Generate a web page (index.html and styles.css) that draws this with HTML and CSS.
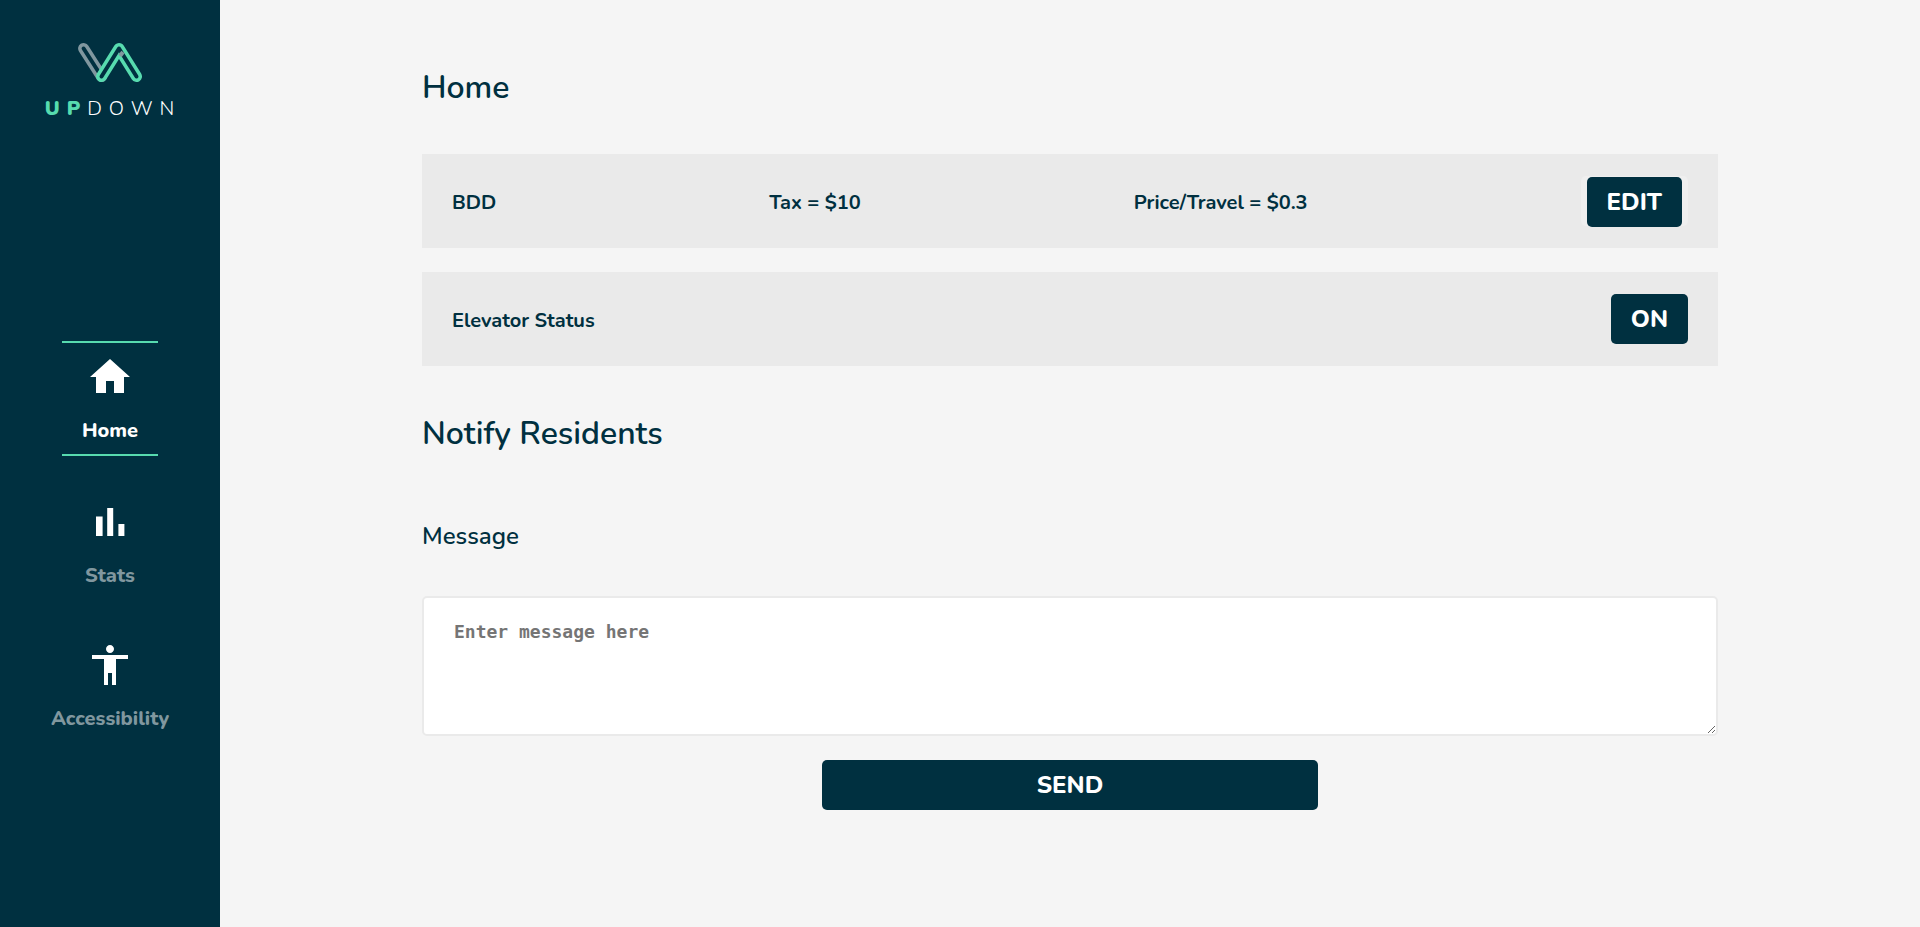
FILE: index.html
```
<!DOCTYPE html>
<html lang="en">
<head>
<meta charset="utf-8">
<title>UpDown</title>
<link rel="stylesheet" href="styles.css">
</head>
<body>
<div class="app">
  <aside class="sidebar">
    <div class="brand">
      <svg class="brand-mark" viewBox="0 0 66 42" role="img" aria-label="UpDown logo" fill="none" stroke-linecap="round" stroke-linejoin="round">
        <path d="M6.6 7.5 24.5 35.5" stroke="#80979f" stroke-width="11"/>
        <path d="M6.6 7.5 24.5 35.5" stroke="#003040" stroke-width="4"/>
        <path d="M24.5 35.5 42 7.5 59.5 35.5" stroke="#57dbaf" stroke-width="11"/>
        <path d="M24.5 35.5 42 7.5 59.5 35.5" stroke="#003040" stroke-width="4"/>
        <path d="M43 15 46 11" stroke="#80979f" stroke-width="4" stroke-linecap="butt"/>
      </svg>
      <p class="wordmark"><strong>UP</strong><span>DOWN</span></p>
    </div>
    <nav class="nav">
      <a class="nav-item active" href="#home">
        <svg class="nav-icon" viewBox="0 0 24 24" aria-hidden="true"><path d="M10 20v-6h4v6h5v-8h3L12 3 2 12h3v8z"/></svg>
        <span>Home</span>
      </a>
      <a class="nav-item" href="#stats">
        <svg class="nav-icon" viewBox="0 0 24 24" aria-hidden="true"><path d="M5 9.2h3.3V19H5zM10.6 5h3v14h-3zm5.600 8h3v6h-3z"/></svg>
        <span>Stats</span>
      </a>
      <a class="nav-item" href="#accessibility">
        <svg class="nav-icon" viewBox="0 0 24 24" aria-hidden="true"><path d="M12 2c1.1 0 2 .9 2 2s-.9 2-2 2-2-.9-2-2 .9-2 2-2zm9 7h-6v13h-2v-6h-2v6H9V9H3V7h18v2z"/></svg>
        <span>Accessibility</span>
      </a>
    </nav>
  </aside>
  <main class="main">
    <h1 class="title">Home</h1>
    <section class="cards">
      <div class="card">
        <p>BDD</p>
        <p>Tax = $10</p>
        <p>Price/Travel = $0.3</p>
        <div class="edit-frame"><button class="btn" type="button">EDIT</button></div>
      </div>
      <div class="card">
        <p>Elevator Status</p>
        <button class="btn" type="button">ON</button>
      </div>
    </section>
    <h2 class="title title-notify">Notify Residents</h2>
    <form class="form">
      <label class="label" for="message">Message</label>
      <textarea class="message" id="message" placeholder="Enter message here"></textarea>
      <button class="btn send" type="button">SEND</button>
    </form>
  </main>
</div>
</body>
</html>
```
FILE: styles.css
```
* {
  box-sizing: border-box;
}

body {
  margin: 0;
  background: #f5f5f5;
  color: #003040;
  font-family: "Nunito", "Lato", sans-serif;
}

h1, h2, p {
  margin: 0;
}

.app {
  display: flex;
  min-height: 100vh;
}

.sidebar {
  flex: 0 0 220px;
  display: flex;
  flex-direction: column;
  align-items: center;
  gap: 218px;
  padding-top: 40px;
  background: #003040;
}

.brand {
  display: flex;
  flex-direction: column;
  align-items: center;
  gap: 11px;
}

.brand-mark {
  width: 66px;
  height: 44px;
}

.wordmark {
  display: flex;
  padding-left: 6px;
  font-size: 20px;
  line-height: 28px;
  letter-spacing: 7px;
  color: #fff;
}

.wordmark strong {
  font-weight: 900;
  color: #57dbaf;
}

.wordmark span {
  font-weight: 300;
}

.nav {
  display: flex;
  flex-direction: column;
  align-items: center;
  gap: 32px;
}

.nav-item {
  display: flex;
  flex-direction: column;
  align-items: center;
  gap: 16px;
  min-width: 96px;
  padding: 10px 0;
  color: #80979f;
  font-size: 20px;
  line-height: 27px;
  font-weight: 800;
  text-decoration: none;
}

.nav-item.active {
  color: #fff;
  border-top: 2px solid #57dbaf;
  border-bottom: 2px solid #57dbaf;
}

.nav-icon {
  width: 48px;
  height: 48px;
  fill: #fff;
}

.main {
  flex: 1;
  min-width: 0;
  padding: 66px 202px 0;
}

.title {
  font-size: 32px;
  line-height: 44px;
  font-weight: 600;
}

.title-notify {
  margin-top: 46px;
}

.cards {
  display: flex;
  flex-direction: column;
  gap: 24px;
  margin-top: 44px;
}

.card {
  display: flex;
  justify-content: space-between;
  align-items: center;
  padding: 22px 30px;
  background: #eaeaea;
  font-size: 20px;
  line-height: 27px;
  font-weight: 700;
}

.card p {
  padding-top: 2px;
}

.edit-frame {
  height: 50px;
  padding: 1px 6px 0;
  border-radius: 5px;
  background: #efefef;
}

.btn {
  height: 50px;
  padding: 0 20px;
  border: 0;
  border-radius: 5px;
  background: #003040;
  color: #fff;
  font-family: inherit;
  font-size: 24px;
  line-height: 32px;
  font-weight: 800;
}

.form {
  display: flex;
  flex-direction: column;
}

.label {
  margin-top: 64px;
  font-size: 24px;
  line-height: 32px;
  font-weight: 600;
}

.message {
  width: 100%;
  height: 140px;
  margin-top: 44px;
  padding: 20px 30px;
  border: 2px solid #eaeaea;
  border-radius: 5px;
  background: #fff;
  font-family: "DejaVu Sans Mono", monospace;
  font-size: 18px;
  line-height: 28px;
  font-weight: 700;
  resize: both;
}

.message::placeholder {
  color: #757575;
}

.send {
  align-self: center;
  width: 496px;
  max-width: 100%;
  margin-top: 24px;
}
```
